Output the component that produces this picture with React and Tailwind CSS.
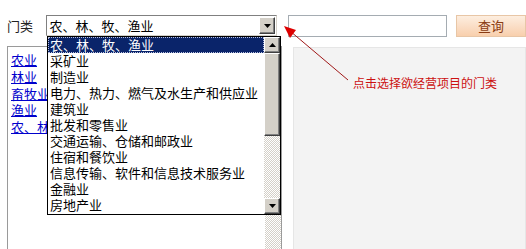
import React from 'react';

const categories = [
  '农、林、牧、渔业',
  '采矿业',
  '制造业',
  '电力、热力、燃气及水生产和供应业',
  '建筑业',
  '批发和零售业',
  '交通运输、仓储和邮政业',
  '住宿和餐饮业',
  '信息传输、软件和信息技术服务业',
  '金融业',
  '房地产业',
];

const subItems = ['农业', '林业', '畜牧业', '渔业', '农、林、牧、渔服务业'];

// small black triangle used on the classic scrollbar buttons
const Tri = ({ up }) => (
  <svg width="7" height="4" viewBox="0 0 7 4">
    {up ? <polygon points="0,4 7,4 3.5,0" fill="#000" /> : <polygon points="0,0 7,0 3.5,4" fill="#000" />}
  </svg>
);

const ScrollBtn = ({ up, className = '' }) => (
  <div
    className={`w-[16px] h-[16px] flex items-center justify-center bg-[#d4d0c8] border border-t-white border-l-white border-r-[#404040] border-b-[#404040] shadow-[inset_-1px_-1px_0_#808080] ${className}`}
  >
    <Tri up={up} />
  </div>
);

const checker = 'bg-[repeating-conic-gradient(#d4d0c8_0_25%,#ffffff_0_50%)] bg-size-[2px_2px]';

export default function App() {
  return (
    <div className="relative w-[526px] h-[249px] overflow-hidden bg-white text-[13px] text-black font-['Noto_Sans_CJK_SC','Noto_Sans',sans-serif]">
      {/* search row */}
      <div className="flex items-start pt-[15px] pl-[7px]">
        <span className="w-[40px] h-[21px] leading-[21px] text-[#222]">门类</span>
        <div className="flex items-center w-[234px] h-[21px] border border-t-[#808080] border-l-[#808080] border-r-[#d4d0c8] border-b-[#d4d0c8] bg-white">
          <span className="pl-[2px] leading-[17px] flex-1">农、林、牧、渔业</span>
          <ScrollBtn className="mr-[1px] h-[17px]" />
        </div>
        <input className="ml-[11px] w-[161px] h-[22px] border border-[#a5acb2] bg-white outline-none" />
        <button className="ml-[9px] w-[70px] h-[22px] shrink-0 border border-[#e8c6a6] bg-linear-to-b from-[#fdeee0] to-[#f8cfad] text-[#8a3b12] text-[13px] leading-[20px]">
          查询
        </button>
      </div>

      {/* lower area */}
      <div className="flex items-start mt-[9px]">
        <div className="relative ml-[7px] w-[275px] h-[210px] border border-[#9a9a9a] bg-white flex">
          <div className="flex-1 pl-[3px] pt-[5px] flex flex-col">
            {subItems.map((s) => (
              <a key={s} href="#" className="leading-[16.75px] text-[#0000cc] underline whitespace-nowrap">
                {s}
              </a>
            ))}
          </div>
          <div className={`w-[16px] h-full ${checker}`} />
        </div>
        <div className="ml-[11px] mt-[1px] flex-1 h-[210px] border border-[#e6e6e6] bg-[#f3f3f3]" />
      </div>

      {/* open dropdown list */}
      <div className="absolute left-[47px] top-[36px] w-[234px] h-[179px] border border-black bg-white flex">
        <div className="flex-1 flex flex-col">
          {categories.map((c, i) => (
            <div
              key={c}
              className={
                i === 0
                  ? 'h-[16px] leading-[14px] pl-[1px] bg-[#0a246a] text-white border border-dotted border-[#b8c0e0] whitespace-nowrap'
                  : 'h-[16px] leading-[16px] pl-[2px] whitespace-nowrap'
              }
            >
              {c}
            </div>
          ))}
        </div>
        <div className="w-[16px] flex flex-col">
          <ScrollBtn up />
          <div className="h-[83px] bg-[#d4d0c8] border border-t-white border-l-white border-r-[#404040] border-b-[#404040] shadow-[inset_-1px_-1px_0_#808080]" />
          <div className={`flex-1 ${checker}`} />
          <ScrollBtn />
        </div>
      </div>

      {/* annotation arrow */}
      <svg className="absolute left-[280px] top-[22px] pointer-events-none" width="80" height="64" viewBox="0 0 80 64">
        <line x1="10" y1="9" x2="68" y2="58" stroke="#a01818" strokeWidth="1" />
        <polygon points="4,4 10,16 16,8" fill="#dd0000" />
      </svg>
      <div className="absolute left-[353px] top-[75px] text-[12px] leading-[16px] text-[#cc1111] whitespace-nowrap">
        点击选择欲经营项目的门类
      </div>
    </div>
  );
}
